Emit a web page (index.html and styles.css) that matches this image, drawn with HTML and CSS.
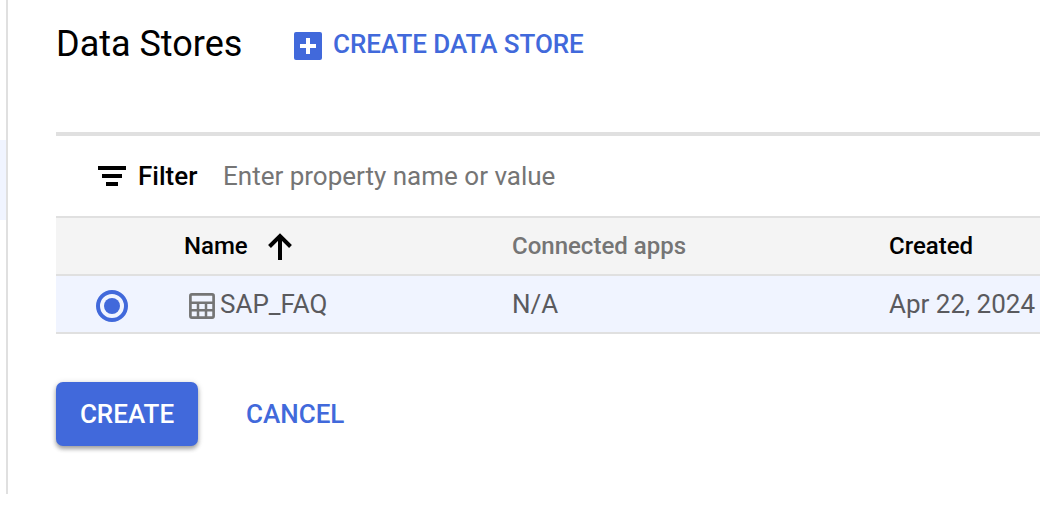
FILE: index.html
```html
<!DOCTYPE html>
<html lang="en">
<head>
<meta charset="utf-8">
<title>Data Stores</title>
<link rel="stylesheet" href="styles.css">
</head>
<body>
<div class="layout">
  <aside class="sidenav"><div class="sidenav-selected"></div></aside>
  <main class="main">
    <header class="page-header">
      <h1 class="title">Data Stores</h1>
      <button class="create-store">
        <svg class="plus-icon" width="28" height="28" viewBox="0 0 28 28"><rect width="28" height="28" rx="2" fill="#4169db"/><path d="M6 14h16M14 6v16" stroke="#fff" stroke-width="4"/></svg>
        <span class="create-store-label">CREATE DATA STORE</span>
      </button>
    </header>
    <section class="table">
      <div class="filter-bar">
        <svg class="filter-icon" width="28" height="20" viewBox="0 0 28 20"><path d="M0 0h28v4H0zM4 8h20v4H4zM8 16h12v4H8z"/></svg>
        <span class="filter-label">Filter</span>
        <span class="filter-hint">Enter property name or value</span>
      </div>
      <div class="row row-head">
        <span></span>
        <span class="cell-name"><span class="name-text">Name</span><svg class="sort-icon" width="24" height="27" viewBox="0 0 24 27" fill="none" stroke="#000" stroke-width="4"><path d="M12 27V3M1.500 13.500 12 3l10.500 10.500"/></svg></span>
        <span class="muted apps-text">Connected apps</span>
        <span class="created-text">Created</span>
      </div>
      <div class="row row-data">
        <span class="cell-radio"><svg width="32" height="32" viewBox="0 0 32 32"><circle cx="16" cy="16" r="14" fill="none" stroke="#4169db" stroke-width="4"/><circle cx="16" cy="16" r="8" fill="#4169db"/></svg></span>
        <span class="cell-store"><svg class="table-icon" width="26" height="26" viewBox="0 0 26 26" fill="none" stroke="#757575" stroke-width="2.500"><rect x="1.400" y="1.400" width="23.200" height="23.200" rx="1.500" stroke-width="2.700"/><path d="M2 9.800h22M2 17.200h22M9 9.500v15M17 9.500v15"/></svg><span class="store-name">SAP_FAQ</span></span>
        <span class="apps-value">N/A</span>
        <span class="date-value">Apr 22, 2024</span>
      </div>
    </section>
    <footer class="actions">
      <button class="btn-create"><span class="btn-create-label">CREATE</span></button>
      <button class="btn-cancel"><span class="btn-cancel-label">CANCEL</span></button>
    </footer>
  </main>
</div>
</body>
</html>
```
FILE: styles.css
```css
* { box-sizing: border-box; }
body { margin: 0; height: 524px; overflow: hidden; background: #fff; font-family: Roboto, sans-serif; color: #000; }
button { margin: 0; padding: 0; border: 0; background: none; font: 500 26px/32px Roboto, sans-serif; color: #4169db; }
svg { display: block; flex: none; }
span { white-space: nowrap; }
.layout { display: flex; height: 494px; }
.sidenav { flex: none; width: 8px; padding-top: 140px; border-right: 2px solid #e0e0e0; }
.sidenav-selected { height: 80px; background: #f0f4ff; }
.main { flex: 1; min-width: 0; padding-left: 48px; }
.page-header { display: flex; align-items: center; height: 132px; padding-bottom: 44px; }
.title { margin: 0; width: 238px; font-size: 36px; line-height: 44px; font-weight: 400; }
.create-store { display: flex; align-items: center; gap: 11px; letter-spacing: -0.05px; }
.plus-icon { margin-top: 3px; }
.table { border-top: 4px solid #e0e0e0; }
.filter-bar { display: flex; align-items: center; height: 80px; padding-left: 42px; font-size: 26px; line-height: 32px; }
.filter-label { width: 85px; margin-left: 12px; font-weight: 500; }
.filter-hint { color: #757575; }
.row { display: grid; grid-template-columns: 128px 328px 377px 151px; align-items: center; height: 58px; border-top: 2px solid #e0e0e0; }
.row-head { background: #f4f4f4; font-size: 24px; line-height: 32px; font-weight: 500; }
.row-data { height: 60px; border-bottom: 2px solid #e0e0e0; background: #f0f4ff; color: #5a5a5e; font-size: 26px; line-height: 32px; }
.cell-name { display: flex; align-items: center; gap: 20px; }
.muted { color: #757575; }
.cell-radio { padding: 4px 0 0 40px; }
.cell-store { display: flex; align-items: center; gap: 5px; padding-left: 5px; }
.table-icon { margin-top: 4px; }
.actions { display: flex; align-items: center; gap: 48px; padding-top: 48px; }
.btn-create { width: 142px; height: 64px; border-radius: 7px; background: #4169db; color: #fff; box-shadow: 0 3px 4px rgba(0,0,0,.3), 0 1px 6px rgba(0,0,0,.16); }
```
